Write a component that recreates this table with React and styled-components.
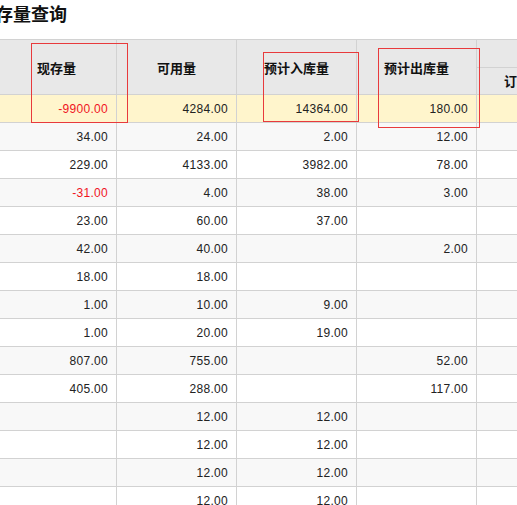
import React from 'react';
import styled, { createGlobalStyle } from 'styled-components';

const GlobalStyle = createGlobalStyle`
  html, body {
    margin: 0;
    padding: 0;
    overflow: hidden;
    background: #fff;
  }
`

const Page = styled.div`
  position: relative;
  margin-left: -3px;
  width: 900px;
  font-family: "Liberation Sans", Arial, "Noto Sans CJK SC", sans-serif;
`

const Title = styled.h2`
  margin: 0 0 0 -2px;
  height: 39px;
  padding-top: 1px;
  box-sizing: border-box;
  font-family: "Noto Sans CJK SC", sans-serif;
  font-size: 18px;
  line-height: 24px;
  font-weight: 700;
  color: #111;
`

const Grid = styled.table`
  border-collapse: separate;
  border-spacing: 0;
  table-layout: fixed;
  width: 720px;
  border-top: 1px solid #d2d2d2;
`

const Col = styled.col`
  width: 120px;
`

const HeadCell = styled.th`
  height: ${p => (p.$tall ? 55 : 27)}px;
  padding: 0;
  box-sizing: border-box;
  background: #e8e8e8;
  border-right: 1px solid #d2d2d2;
  border-bottom: 1px solid #d2d2d2;
  font-family: "Noto Sans CJK SC", sans-serif;
  font-size: 13px;
  font-weight: 700;
  color: #111;
  text-align: center;
  vertical-align: middle;
  white-space: nowrap;
  overflow: hidden;
`

const Row = styled.tr`
  background: ${p => (p.$current ? '#fff5cc' : p.$odd ? '#f8f8f8' : '#fff')};
`

const Cell = styled.td`
  height: 27px;
  padding: 0 8px 0 0;
  box-sizing: content-box;
  border-right: 1px solid #d2d2d2;
  border-bottom: 1px solid #d2d2d2;
  text-align: right;
  vertical-align: middle;
  font-size: 12px;
  letter-spacing: 0.3px;
  color: ${p => (p.$neg ? '#f0141e' : '#222')};
  white-space: nowrap;
  overflow: hidden;
`

// red annotation boxes drawn over the grid
const Mark = styled.div`
  position: absolute;
  border: 1px solid #e83a3c;
  pointer-events: none;
`

const rows = [
  ['-9900.00', '4284.00', '14364.00', '180.00'],
  ['34.00', '24.00', '2.00', '12.00'],
  ['229.00', '4133.00', '3982.00', '78.00'],
  ['-31.00', '4.00', '38.00', '3.00'],
  ['23.00', '60.00', '37.00', ''],
  ['42.00', '40.00', '', '2.00'],
  ['18.00', '18.00', '', ''],
  ['1.00', '10.00', '9.00', ''],
  ['1.00', '20.00', '19.00', ''],
  ['807.00', '755.00', '', '52.00'],
  ['405.00', '288.00', '', '117.00'],
  ['', '12.00', '12.00', ''],
  ['', '12.00', '12.00', ''],
  ['', '12.00', '12.00', ''],
  ['', '12.00', '12.00', ''],
  ['', '12.00', '12.00', ''],
]

const marks = [
  { left: 34, top: 43, width: 95, height: 78 },
  { left: 266, top: 52, width: 94, height: 68 },
  { left: 381, top: 48, width: 100, height: 78 },
]

function App() {
  return (
    <>
      <GlobalStyle />
      <Page>
        <Title>存量查询</Title>
        <Grid>
          <colgroup>
            {[0, 1, 2, 3, 4, 5].map(i => <Col key={i} />)}
          </colgroup>
          <thead>
            <tr>
              <HeadCell rowSpan={2} $tall>现存量</HeadCell>
              <HeadCell rowSpan={2} $tall>可用量</HeadCell>
              <HeadCell rowSpan={2} $tall>预计入库量</HeadCell>
              <HeadCell rowSpan={2} $tall>预计出库量</HeadCell>
              <HeadCell colSpan={2}>订单信息</HeadCell>
            </tr>
            <tr>
              <HeadCell>订单占用量</HeadCell>
              <HeadCell>在途量</HeadCell>
            </tr>
          </thead>
          <tbody>
            {rows.map((r, i) => (
              <Row key={i} $current={i === 0} $odd={i % 2 === 1}>
                {r.map((v, j) => (
                  <Cell key={j} $neg={v.startsWith('-')}>{v}</Cell>
                ))}
                <Cell />
                <Cell />
              </Row>
            ))}
          </tbody>
        </Grid>
        {marks.map((m, i) => (
          <Mark key={i} style={m} />
        ))}
      </Page>
    </>
  );
}

export default App;
